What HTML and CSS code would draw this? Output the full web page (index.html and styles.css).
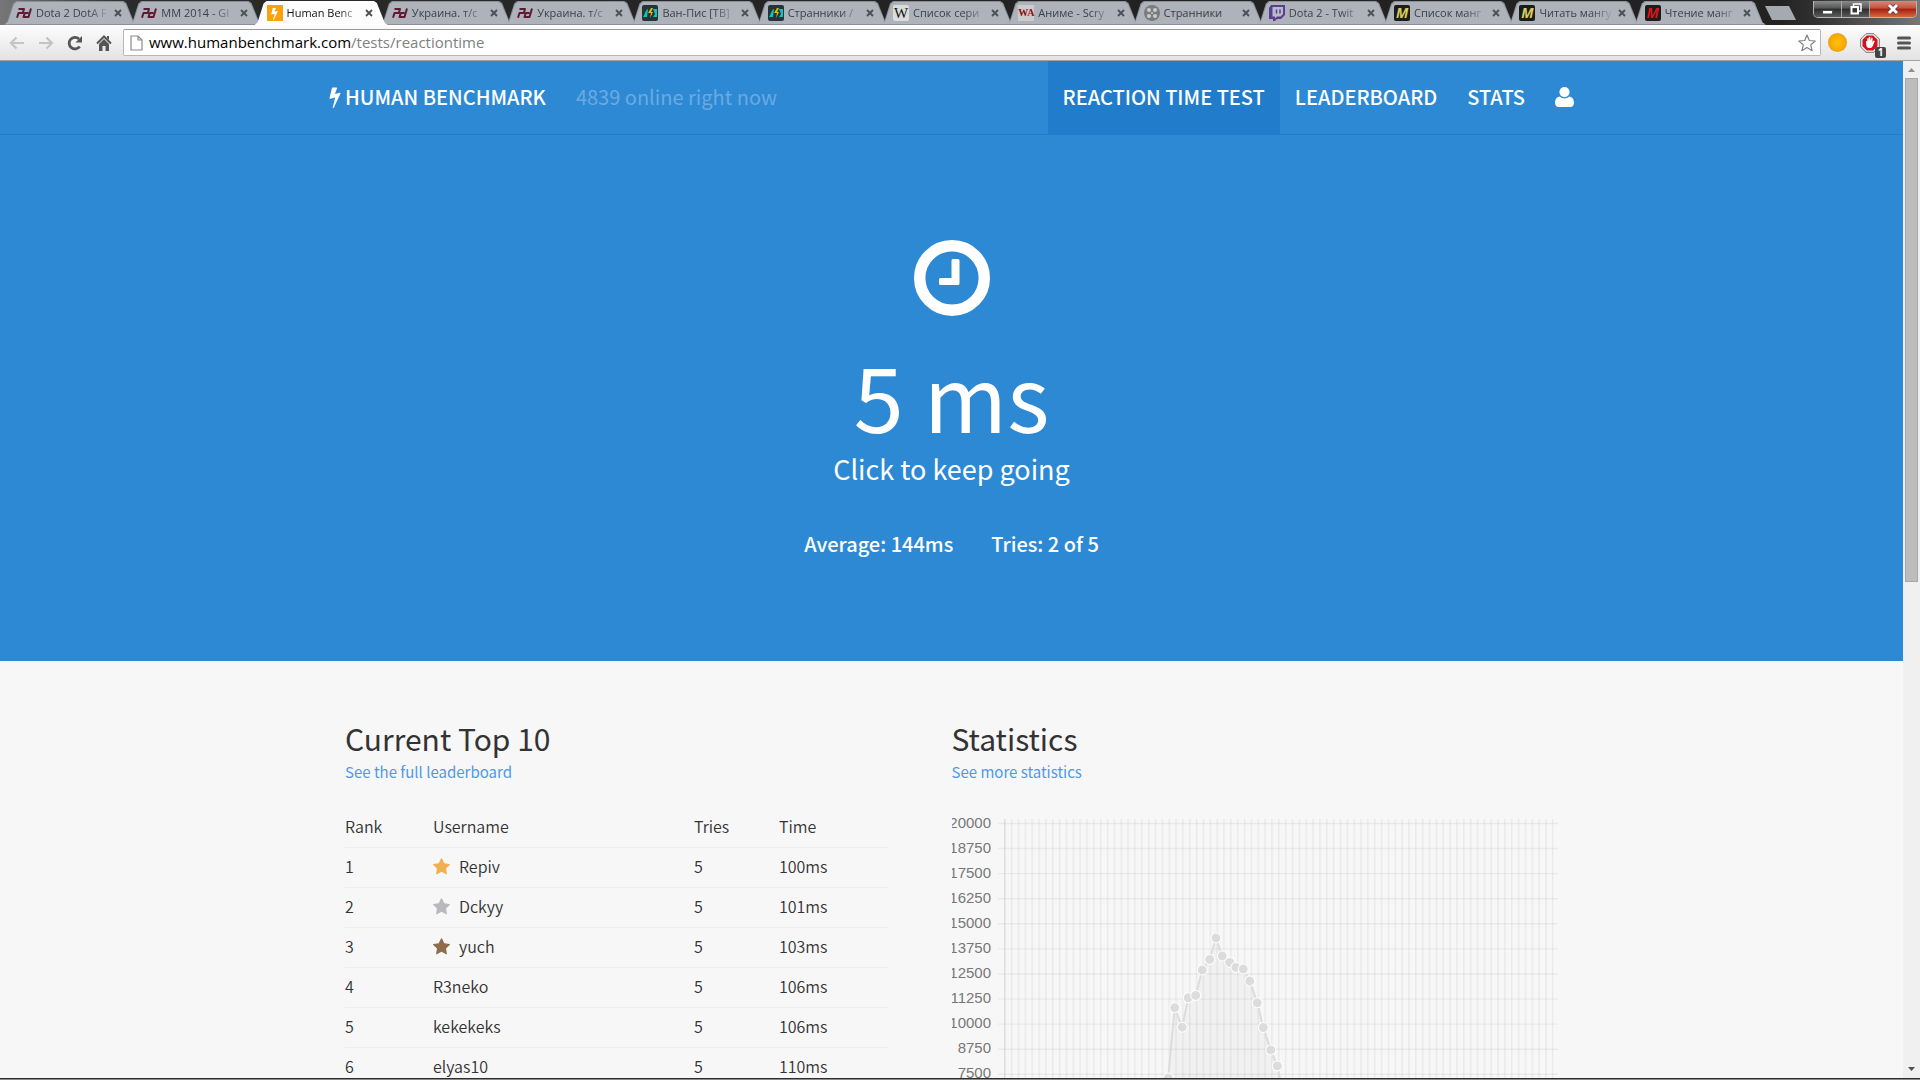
FILE: index.html
```html
<!DOCTYPE html>
<html lang="en">
<head>
<meta charset="utf-8">
<title>Human Benchmark - Reaction Time Test</title>
<link rel="stylesheet" href="styles.css">
</head>
<body>
<svg class="defs" aria-hidden="true">
  <symbol id="pd" viewBox="0 0 16 12"><path d="M2.500 2H8L6.800 6H2.500L1 10.800M15 1.500L12.500 10H7.500L8.800 6H12.500" fill="none" stroke="#611831" stroke-width="2" stroke-linejoin="round"/></symbol>
  <symbol id="wave" viewBox="0 0 16 16"><rect width="16" height="16" rx="2" fill="#25343a"/><path d="M1 12c2-2 2-7 5-8l-1 8zM11 4h4v8h-4l2-3z" fill="#13bfc6"/><path d="M9 3L6 8h3l-1 5 3-6H9l2-4z" fill="#eab320"/></symbol>
  <symbol id="reel" viewBox="0 0 16 16"><circle cx="8" cy="8" r="8" fill="#7c7c7c"/><g fill="#c9ccd2"><circle cx="5" cy="5" r="2"/><circle cx="11" cy="5" r="2"/><circle cx="5" cy="11" r="2"/><circle cx="11" cy="11" r="2"/><circle cx="8" cy="8" r="1"/></g></symbol>
  <symbol id="twitch" viewBox="0 0 16 16"><path d="M2 0h14v10l-4 4H8l-2 2H4v-2H0V3z" fill="#5a3e92"/><path d="M3.500 2H14v7l-2.500 2.500H8L6 13.500v-2H3.500z" fill="#b9bac8"/><path d="M7.500 4.500v4M11 4.500v4" stroke="#5a3e92" stroke-width="1.500"/></symbol>
  <symbol id="close" viewBox="0 0 8 8"><path d="M1 1l6 6M7 1L1 7" stroke="currentColor" stroke-width="1.800"/></symbol>
  <symbol id="bolt" viewBox="448 0 896 1792"><path fill="currentColor" d="M1333 566q18 20 7 44l-540 1157q-13 25-42 25-4 0-14-2-17-5-25.500-19t-4.500-30l197-808-406 101q-4 1-12 1-18 0-31-11-18-15-13-39l201-825q4-14 16-23t28-9h328q19 0 32 12.500t13 29.500q0 8-5 18l-171 463 396-98q8-2 12-2 19 0 34 15z"/></symbol>
  <symbol id="star" viewBox="64 60 1664 1580"><path fill="currentColor" d="M1728 647q0 22-26 48l-363 354 86 500q1 7 1 20 0 21-10.500 35.500t-30.500 14.500q-19 0-40-12l-449-236-449 236q-22 12-40 12-21 0-31.500-14.500t-10.500-35.500q0-6 2-20l86-500-364-354q-25-27-25-48 0-37 56-46l502-73 225-455q19-41 49-41t49 41l225 455 502 73q56 9 56 46z"/></symbol>
</svg>

<header class="browser">
  <div class="strip">
    <nav class="tabs" aria-label="Open tabs">
      <div class="tab"><svg class="fav"><use href="#pd"/></svg><span class="tab-title">Dota 2 DotA F</span><button class="tab-close" aria-label="Close tab"><svg><use href="#close"/></svg></button></div>
      <div class="tab"><svg class="fav"><use href="#pd"/></svg><span class="tab-title">MM 2014 - GI</span><button class="tab-close" aria-label="Close tab"><svg><use href="#close"/></svg></button></div>
      <div class="tab active"><span class="fav fav-bolt"><svg><use href="#bolt"/></svg></span><span class="tab-title">Human Benc</span><button class="tab-close" aria-label="Close tab"><svg><use href="#close"/></svg></button></div>
      <div class="tab"><svg class="fav"><use href="#pd"/></svg><span class="tab-title">Украина. т/с</span><button class="tab-close" aria-label="Close tab"><svg><use href="#close"/></svg></button></div>
      <div class="tab"><svg class="fav"><use href="#pd"/></svg><span class="tab-title">Украина. т/с</span><button class="tab-close" aria-label="Close tab"><svg><use href="#close"/></svg></button></div>
      <div class="tab"><svg class="fav"><use href="#wave"/></svg><span class="tab-title">Ван-Пис [ТВ]</span><button class="tab-close" aria-label="Close tab"><svg><use href="#close"/></svg></button></div>
      <div class="tab"><svg class="fav"><use href="#wave"/></svg><span class="tab-title">Странники /</span><button class="tab-close" aria-label="Close tab"><svg><use href="#close"/></svg></button></div>
      <div class="tab"><span class="fav fav-w">W</span><span class="tab-title">Список сери</span><button class="tab-close" aria-label="Close tab"><svg><use href="#close"/></svg></button></div>
      <div class="tab"><span class="fav fav-wa">WA</span><span class="tab-title">Аниме - Scry</span><button class="tab-close" aria-label="Close tab"><svg><use href="#close"/></svg></button></div>
      <div class="tab"><svg class="fav"><use href="#reel"/></svg><span class="tab-title whole">Странники</span><button class="tab-close" aria-label="Close tab"><svg><use href="#close"/></svg></button></div>
      <div class="tab"><svg class="fav"><use href="#twitch"/></svg><span class="tab-title">Dota 2 - Twit</span><button class="tab-close" aria-label="Close tab"><svg><use href="#close"/></svg></button></div>
      <div class="tab"><span class="fav fav-m">M</span><span class="tab-title">Список манг</span><button class="tab-close" aria-label="Close tab"><svg><use href="#close"/></svg></button></div>
      <div class="tab"><span class="fav fav-m">M</span><span class="tab-title">Читать мангу</span><button class="tab-close" aria-label="Close tab"><svg><use href="#close"/></svg></button></div>
      <div class="tab"><span class="fav fav-m red">M</span><span class="tab-title">Чтение манг</span><button class="tab-close" aria-label="Close tab"><svg><use href="#close"/></svg></button></div>
    </nav>
    <button class="new-tab" aria-label="New tab"></button>
    <div class="window-buttons">
      <button class="win" aria-label="Minimize"><svg width="12" height="12" viewBox="0 0 12 12"><rect x=".5" y="7.500" width="10" height="3.500" fill="#fff" stroke="#444b58"/></svg></button>
      <button class="win" aria-label="Restore"><svg width="12" height="12" viewBox="0 0 12 12"><path d="M3.500 3V1h7.500v7H9" fill="none" stroke="#fff" stroke-width="1.500"/><rect x="1.500" y="4" width="6.500" height="6.500" fill="none" stroke="#fff" stroke-width="2"/></svg></button>
      <button class="win win-close" aria-label="Close window"><svg width="14" height="12" viewBox="0 0 14 12"><path d="M3 2l8 8M11 2l-8 8" stroke="#4c3a42" stroke-width="4.500"/><path d="M3 2l8 8M11 2l-8 8" stroke="#fff" stroke-width="3"/></svg></button>
    </div>
  </div>
  <div class="toolbar">
    <button class="tool" aria-label="Back"><svg width="16" height="14" viewBox="0 0 16 14"><path d="M15 7H2M7.500 1.500L2 7l5.500 5.500" fill="none" stroke="#c4c4c4" stroke-width="2.200"/></svg></button>
    <button class="tool" aria-label="Forward"><svg width="16" height="14" viewBox="0 0 16 14"><path d="M1 7h13M8.500 1.500L14 7l-5.500 5.500" fill="none" stroke="#c4c4c4" stroke-width="2.200"/></svg></button>
    <button class="tool" aria-label="Reload"><svg width="16" height="16" viewBox="0 0 16 16"><path d="M12.700 11.500A5.800 5.800 0 1 1 12 4" fill="none" stroke="#555" stroke-width="2.800"/><path d="M15 1v6.500H8.500z" fill="#555"/></svg></button>
    <button class="tool" aria-label="Home"><svg width="16" height="16" viewBox="0 0 16 16"><path d="M1 8.500L8 1.500l7 7" fill="none" stroke="#555" stroke-width="2"/><path d="M11 1h2v4l-2-2zM3 9l5-5 5 5v7H9.500v-5h-3v5H3z" fill="#555"/></svg></button>
    <div class="omnibox">
      <svg width="13" height="16" viewBox="0 0 13 16"><path d="M1 1h7l4 4v10H1zM8 1v4h4" fill="#fff" stroke="#8a8a8a" stroke-width="1.200"/></svg>
      <span class="url"><b>www.humanbenchmark.com</b>/tests/reactiontime</span>
      <button class="bookmark" aria-label="Bookmark"><svg width="18" height="18" viewBox="0 0 18 18"><path d="M9 1l2.300 5.500 5.900.5-4.500 3.900 1.400 5.800L9 13.600l-5.100 3.100 1.400-5.800L.8 7l5.900-.5z" fill="#fff" stroke="#808080" stroke-width="1.200" stroke-linejoin="round"/></svg></button>
    </div>
    <button class="tool ext-sun" aria-label="Extension"></button>
    <button class="tool ext-block" aria-label="Ad blocker"><svg width="20" height="20" viewBox="0 0 20 20"><path d="M6 .7h8L19.300 6v8L14 19.300H6L.7 14V6z" fill="#eee" stroke="#777" stroke-width="1"/><path d="M6.800 2.500h6.400l4.300 4.300v6.400l-4.300 4.300H6.800l-4.300-4.300V6.800z" fill="#d4121b"/><path d="M6 8l1.200.3V5.500l1.300-.6.4 3V4l1.300-.3.4 4 .8-3.300 1.200.6-.2 4 1.300-1.500 1.100.6-2 4.800-1.600 2H8l-1.600-2z" fill="#fff"/></svg><span class="badge">1</span></button>
    <button class="tool menu" aria-label="Menu"><svg width="14" height="14" viewBox="0 0 14 14"><path d="M1.500 2h11M1.500 7h11M1.500 12h11" stroke="#555" stroke-width="3" stroke-linecap="round"/></svg></button>
  </div>
</header>

<div class="viewport">
  <main class="page">
    <section class="hero">
      <nav class="site-nav">
        <div class="nav-inner">
          <a class="brand" href="#"><svg width="12" height="22"><use href="#bolt"/></svg>HUMAN BENCHMARK</a>
          <span class="online">4839 online right now</span>
          <a class="nav-link current" href="#">REACTION TIME TEST</a>
          <a class="nav-link" href="#">LEADERBOARD</a>
          <a class="nav-link" href="#">STATS</a>
          <a class="nav-link" href="#" aria-label="Account"><svg width="19" height="20" viewBox="0 0 19 20"><path fill="#fff" d="M4.600 9.500c3 2.600 6.800 2.600 9.800 0C17.500 10 19 12.500 19 15.800c0 2.700-1.400 4.200-3.600 4.200H3.600C1.400 20 0 18.500 0 15.800 0 12.500 1.500 10 4.600 9.500z"/><circle cx="9.500" cy="5.200" r="5.700" fill="#2d89d4"/><circle cx="9.500" cy="5.100" r="5.100" fill="#fff"/></svg></a>
        </div>
      </nav>
      <div class="result">
        <svg class="clock" width="76" height="76" viewBox="0 0 76 76"><circle cx="38" cy="38" r="32.300" fill="none" stroke="#fff" stroke-width="11.400"/><path d="M39 19h5q1.500 0 1.500 1.500V43.500q0 1.500-1.500 1.500H26.500Q25 45 25 43.500V39.500q0-1.500 1.500-1.500h11V20.500Q37.500 19 39 19z" fill="#fff"/></svg>
        <h1 class="score">5 ms</h1>
        <button class="again">Click to keep going</button>
        <p class="totals"><span>Average: 144ms</span><span>Tries: 2 of 5</span></p>
      </div>
    </section>

    <div class="columns">
      <section class="board">
        <h2>Current Top 10</h2>
        <a class="more" href="#">See the full leaderboard</a>
        <table class="ranks">
          <thead><tr><th class="c-rank">Rank</th><th class="c-name">Username</th><th class="c-tries">Tries</th><th>Time</th></tr></thead>
          <tbody>
            <tr><td>1</td><td><svg class="medal gold"><use href="#star"/></svg>Repiv</td><td>5</td><td>100ms</td></tr>
            <tr><td>2</td><td><svg class="medal silver"><use href="#star"/></svg>Dckyy</td><td>5</td><td>101ms</td></tr>
            <tr><td>3</td><td><svg class="medal bronze"><use href="#star"/></svg>yuch</td><td>5</td><td>103ms</td></tr>
            <tr><td>4</td><td>R3neko</td><td>5</td><td>106ms</td></tr>
            <tr><td>5</td><td>kekekeks</td><td>5</td><td>106ms</td></tr>
            <tr><td>6</td><td>elyas10</td><td>5</td><td>110ms</td></tr>
          </tbody>
        </table>
      </section>
      <section class="stats">
        <h2>Statistics</h2>
        <a class="more" href="#">See more statistics</a>
        <svg class="chart" viewBox="0 0 606 284" role="img" aria-label="Distribution of reaction times">
          <defs><pattern id="cols" x="52" y="0" width="6.845" height="284" patternUnits="userSpaceOnUse"><rect width="1.400" height="284" fill="#000" fill-opacity=".055"/></pattern></defs>
          <rect x="52" y="4" width="549" height="280" fill="url(#cols)"/>
          <path d="M52.700 4V284" stroke="#000" stroke-opacity=".06" stroke-width="1.500"/>
          <path d="M46 8.500H606M46 33.500H606M46 58.600H606M46 83.700H606M46 108.700H606M46 133.800H606M46 158.900H606M46 184H606M46 209H606M46 234.100H606M46 259.100H606" stroke="#000" stroke-opacity=".05" stroke-width="1.400"/>
          <g transform="translate(-1 0)">
          <path class="area" d="M211 284L217 262.700 223.500 192.700 231 212 237 182.700 244.500 180.300 251 155 258.500 144.300 264.700 123 271 141 278.500 147.300 284.700 152.300 292 154 298.500 166 306 187.700 312 212.300 319.500 234.700 326 250.700 333 284z"/>
          <path class="line" d="M216 284L217 262.700 223.500 192.700 231 212 237 182.700 244.500 180.300 251 155 258.500 144.300 264.700 123 271 141 278.500 147.300 284.700 152.300 292 154 298.500 166 306 187.700 312 212.300 319.500 234.700 326 250.700 333 284"/>
          <g class="dots"><circle cx="217" cy="262.700" r="5"/><circle cx="223.500" cy="192.700" r="5"/><circle cx="231" cy="212" r="5"/><circle cx="237" cy="182.700" r="5"/><circle cx="244.500" cy="180.300" r="5"/><circle cx="251" cy="155" r="5"/><circle cx="258.500" cy="144.300" r="5"/><circle cx="264.700" cy="123" r="5"/><circle cx="271" cy="141" r="5"/><circle cx="278.500" cy="147.300" r="5"/><circle cx="284.700" cy="152.300" r="5"/><circle cx="292" cy="154" r="5"/><circle cx="298.500" cy="166" r="5"/><circle cx="306" cy="187.700" r="5"/><circle cx="312" cy="212.300" r="5"/><circle cx="319.500" cy="234.700" r="5"/><circle cx="326" cy="250.700" r="5"/></g>
          </g>
          <g class="ticks"><text x="39" y="13">20000</text><text x="39" y="38">18750</text><text x="39" y="63">17500</text><text x="39" y="88">16250</text><text x="39" y="113">15000</text><text x="39" y="138">13750</text><text x="39" y="163">12500</text><text x="39" y="188">11250</text><text x="39" y="213">10000</text><text x="39" y="238">8750</text><text x="39" y="263">7500</text></g>
        </svg>
      </section>
    </div>
  </main>
  <div class="scrollbar" aria-hidden="true">
    <svg width="17" height="17" viewBox="0 0 17 17"><path d="M5 11h7L8.500 7z" fill="#8f8f8f"/></svg>
    <div class="thumb"></div>
    <svg width="17" height="17" viewBox="0 0 17 17"><path d="M5 6h7L8.500 10z" fill="#505050"/></svg>
  </div>
</div>
<footer class="edge"></footer>
</body>
</html>
```

FILE: styles.css
```css
* { box-sizing: border-box; }

body {
  margin: 0;
  height: 100vh;
  display: flex;
  flex-direction: column;
  overflow: hidden;
  background: #f7f7f7;
  font-family: "Noto Sans CJK SC", "Source Sans Pro", sans-serif;
  color: #333;
}

button {
  border: 0;
  padding: 0;
  margin: 0;
  background: none;
  font: inherit;
  color: inherit;
}

a { text-decoration: none; }
svg { display: block; flex: none; }
.defs { position: absolute; width: 0; height: 0; }

/* Browser frame */
.browser { flex: none; font-family: "Open Sans", "Noto Sans", sans-serif; }

.strip {
  display: flex;
  height: 25px;
  padding: 1px 3px 0 4px;
  background: linear-gradient(90deg, #777 0, #2b2b2b 130px, #222 1000px, #222 calc(100% - 140px), #333 calc(100% - 100px), #777 100%);
}

.tabs { display: flex; flex: 0 1 1754px; min-width: 0; }

.tab {
  position: relative;
  display: flex;
  flex: 1 1 0;
  align-items: center;
  min-width: 0;
  margin-right: -8px;
  padding: 0 15px 0 12px;
  color: #3c4048;
  z-index: 0;
}

.tab::before,
.tab::after {
  content: "";
  position: absolute;
  inset: 0;
  z-index: -1;
  background: #8b8f96;
  clip-path: polygon(0 100%, 3px 90%, 9px 10%, 12px 0, calc(100% - 14px) 0, calc(100% - 11px) 8%, calc(100% - 3px) 92%, 100% 100%);
}

.tab::after { inset: 1px 1px 1px 1px; background: #adb2bb; }
.tab.active { z-index: 1; color: #111; }
.tab.active::before { background: #fff; }
.tab.active::after { bottom: 0; background: #fdfdfd; }

.fav { width: 16px; height: 16px; flex: none; display: grid; place-items: center; line-height: 16px; }
.fav-bolt { background: #f9a20d; color: #fff; }
.fav-bolt svg { width: 7px; height: 13px; }
.fav-w { background: #dcdcdc; border-radius: 2px; color: #111; font-family: "Liberation Serif", serif; font-size: 15px; }
.fav-wa { background: #ccc; color: #8e0d12; font-family: "Liberation Serif", serif; font-size: 10px; font-weight: bold; }
.fav-m { background: #1c1c18; border-radius: 2px; color: #d8cc63; font-style: italic; font-size: 14px; font-weight: bold; }
.fav-m.red { color: #d8161c; }

.tab-title {
  flex: 1;
  min-width: 0;
  margin: 0 4px 0 4px;
  overflow: hidden;
  white-space: nowrap;
  font-size: 11px;
  line-height: 20px;
  mask-image: linear-gradient(90deg, #000 70%, transparent);
}

.tab-title.whole { mask-image: none; }

.tab-close { color: #4c4f55; }
.tab-close svg { width: 8px; height: 8px; }

.new-tab {
  flex: none;
  width: 31px;
  height: 14px;
  margin: 5px auto 0 7px;
  background: #a5a9b0;
  clip-path: polygon(0 0, 24px 0, 100% 100%, 7px 100%);
}

.window-buttons {
  display: flex;
  height: 17px;
  border: 1px solid #b5b5b5;
  border-top: 0;
  border-radius: 0 0 5px 5px;
  overflow: hidden;
}

.win { display: grid; place-items: center; width: 28px; border-right: 1px solid #aaa; background: linear-gradient(#8c8c8c, #555 45%, #2c2c2c 50%, #5c5c5c); }
.win-close { width: 46px; border-right: 0; background: linear-gradient(#d58a7c, #c5513d 45%, #a51f0c 50%, #d7683e); }

.toolbar {
  display: flex;
  align-items: center;
  height: 36px;
  padding: 0 9px 0 3px;
  background: linear-gradient(#fdfdfd, #e3e3e3);
  border-bottom: 1px solid #a2a2a2;
}

.tool { position: relative; display: grid; place-items: center; width: 28px; margin-right: 1px; flex: none; }

.omnibox {
  display: flex;
  flex: 1;
  align-items: center;
  gap: 6px;
  height: 27px;
  margin: 0 7px 0 4px;
  padding: 0 4px 0 6px;
  background: #fff;
  border: 1px solid #b8b8b8;
  border-top-color: #999;
  border-radius: 2px;
}

.url { flex: 1; font-size: 15px; line-height: 20px; padding-bottom: 2px; color: #808080; }
.url b { font-weight: normal; color: #000; }

.ext-sun { width: 19px; height: 19px; margin-right: 13px; border-radius: 50%; background: radial-gradient(#ffc400, #f5a70b 60%, #d97b10); }
.ext-block { width: 20px; margin-right: 15px; }

.badge {
  position: absolute;
  right: -6px;
  bottom: -5px;
  width: 11px;
  height: 11px;
  background: #444;
  border-radius: 2px;
  color: #fff;
  font-size: 10px;
  font-weight: bold;
  line-height: 11px;
}

.menu { width: 18px; margin: 0 -2px 0 0; }

/* Page area */
.viewport { flex: 1; min-height: 0; display: flex; overflow: hidden; }
.page { flex: 1; min-width: 0; overflow: hidden; }

.scrollbar { display: flex; flex-direction: column; width: 17px; background: #f0f0f0; }
.thumb { height: 504px; margin: 0 2px auto; background: #bcbcbc; border: 1px solid #a8a8a8; }

.hero { display: flex; flex-direction: column; height: 600px; background: #2d89d4; color: #fff; }
.site-nav { border-bottom: 1px solid #217dcb; }
.nav-inner { display: flex; max-width: 1275px; margin: 0 auto; font-size: 20px; font-weight: 500; line-height: 72px; white-space: nowrap; }
.brand, .online, .nav-link { padding: 0 15px 1px; color: #fff; }
.brand { display: flex; align-items: center; gap: 4px; }
.online { flex: 1; font-weight: 400; color: #69abe1; }
.nav-link { display: flex; align-items: center; }
.current { background: #217dcb; }

.result { display: flex; flex-direction: column; align-items: center; padding-top: 105px; }
.score { margin: 28px 0 0; font-size: 90px; font-weight: 400; line-height: 100px; }
.again { font-size: 27px; line-height: 50px; }
.totals { display: flex; gap: 38px; margin: 33px 0 0; font-size: 20px; font-weight: 500; line-height: 34px; }

.columns { display: grid; grid-template-columns: 1fr 1fr; max-width: 1213px; margin: 0 auto; padding-top: 57px; }
.board { padding-right: 64px; }
h2 { margin: 0; font-size: 30px; font-weight: 400; line-height: 40px; }
.more { display: block; font-size: 15px; line-height: 28px; color: #4f97ee; }

.ranks { width: 100%; margin-top: 21px; border-collapse: collapse; table-layout: fixed; font-size: 16px; }
.ranks th, .ranks td { height: 40px; padding: 0 0 2px; text-align: left; font-weight: 350; line-height: 24px; border-bottom: 1px solid #eee; }
.c-rank { width: 88px; }
.c-name { width: 261px; }
.c-tries { width: 85px; }

.medal { display: inline-block; width: 17px; height: 17px; margin-right: 9px; vertical-align: -2px; }
.gold { color: #f0b04f; }
.silver { color: #b9b8be; }
.bronze { color: #8e6e4b; }

.chart { width: 100%; margin-top: 29px; }
.area { fill: #000; fill-opacity: .025; }
.line { fill: none; stroke: #dcdcdc; stroke-width: 2; }
.dots { fill: #dcdcdc; stroke: #fff; stroke-width: 1; }
.ticks { font-family: "Liberation Sans", Arial, sans-serif; font-size: 15px; fill: #777; text-anchor: end; }

.edge { flex: none; height: 2px; background: #8c8c8c; border-top: 1px solid #2c2c2c; }
```
